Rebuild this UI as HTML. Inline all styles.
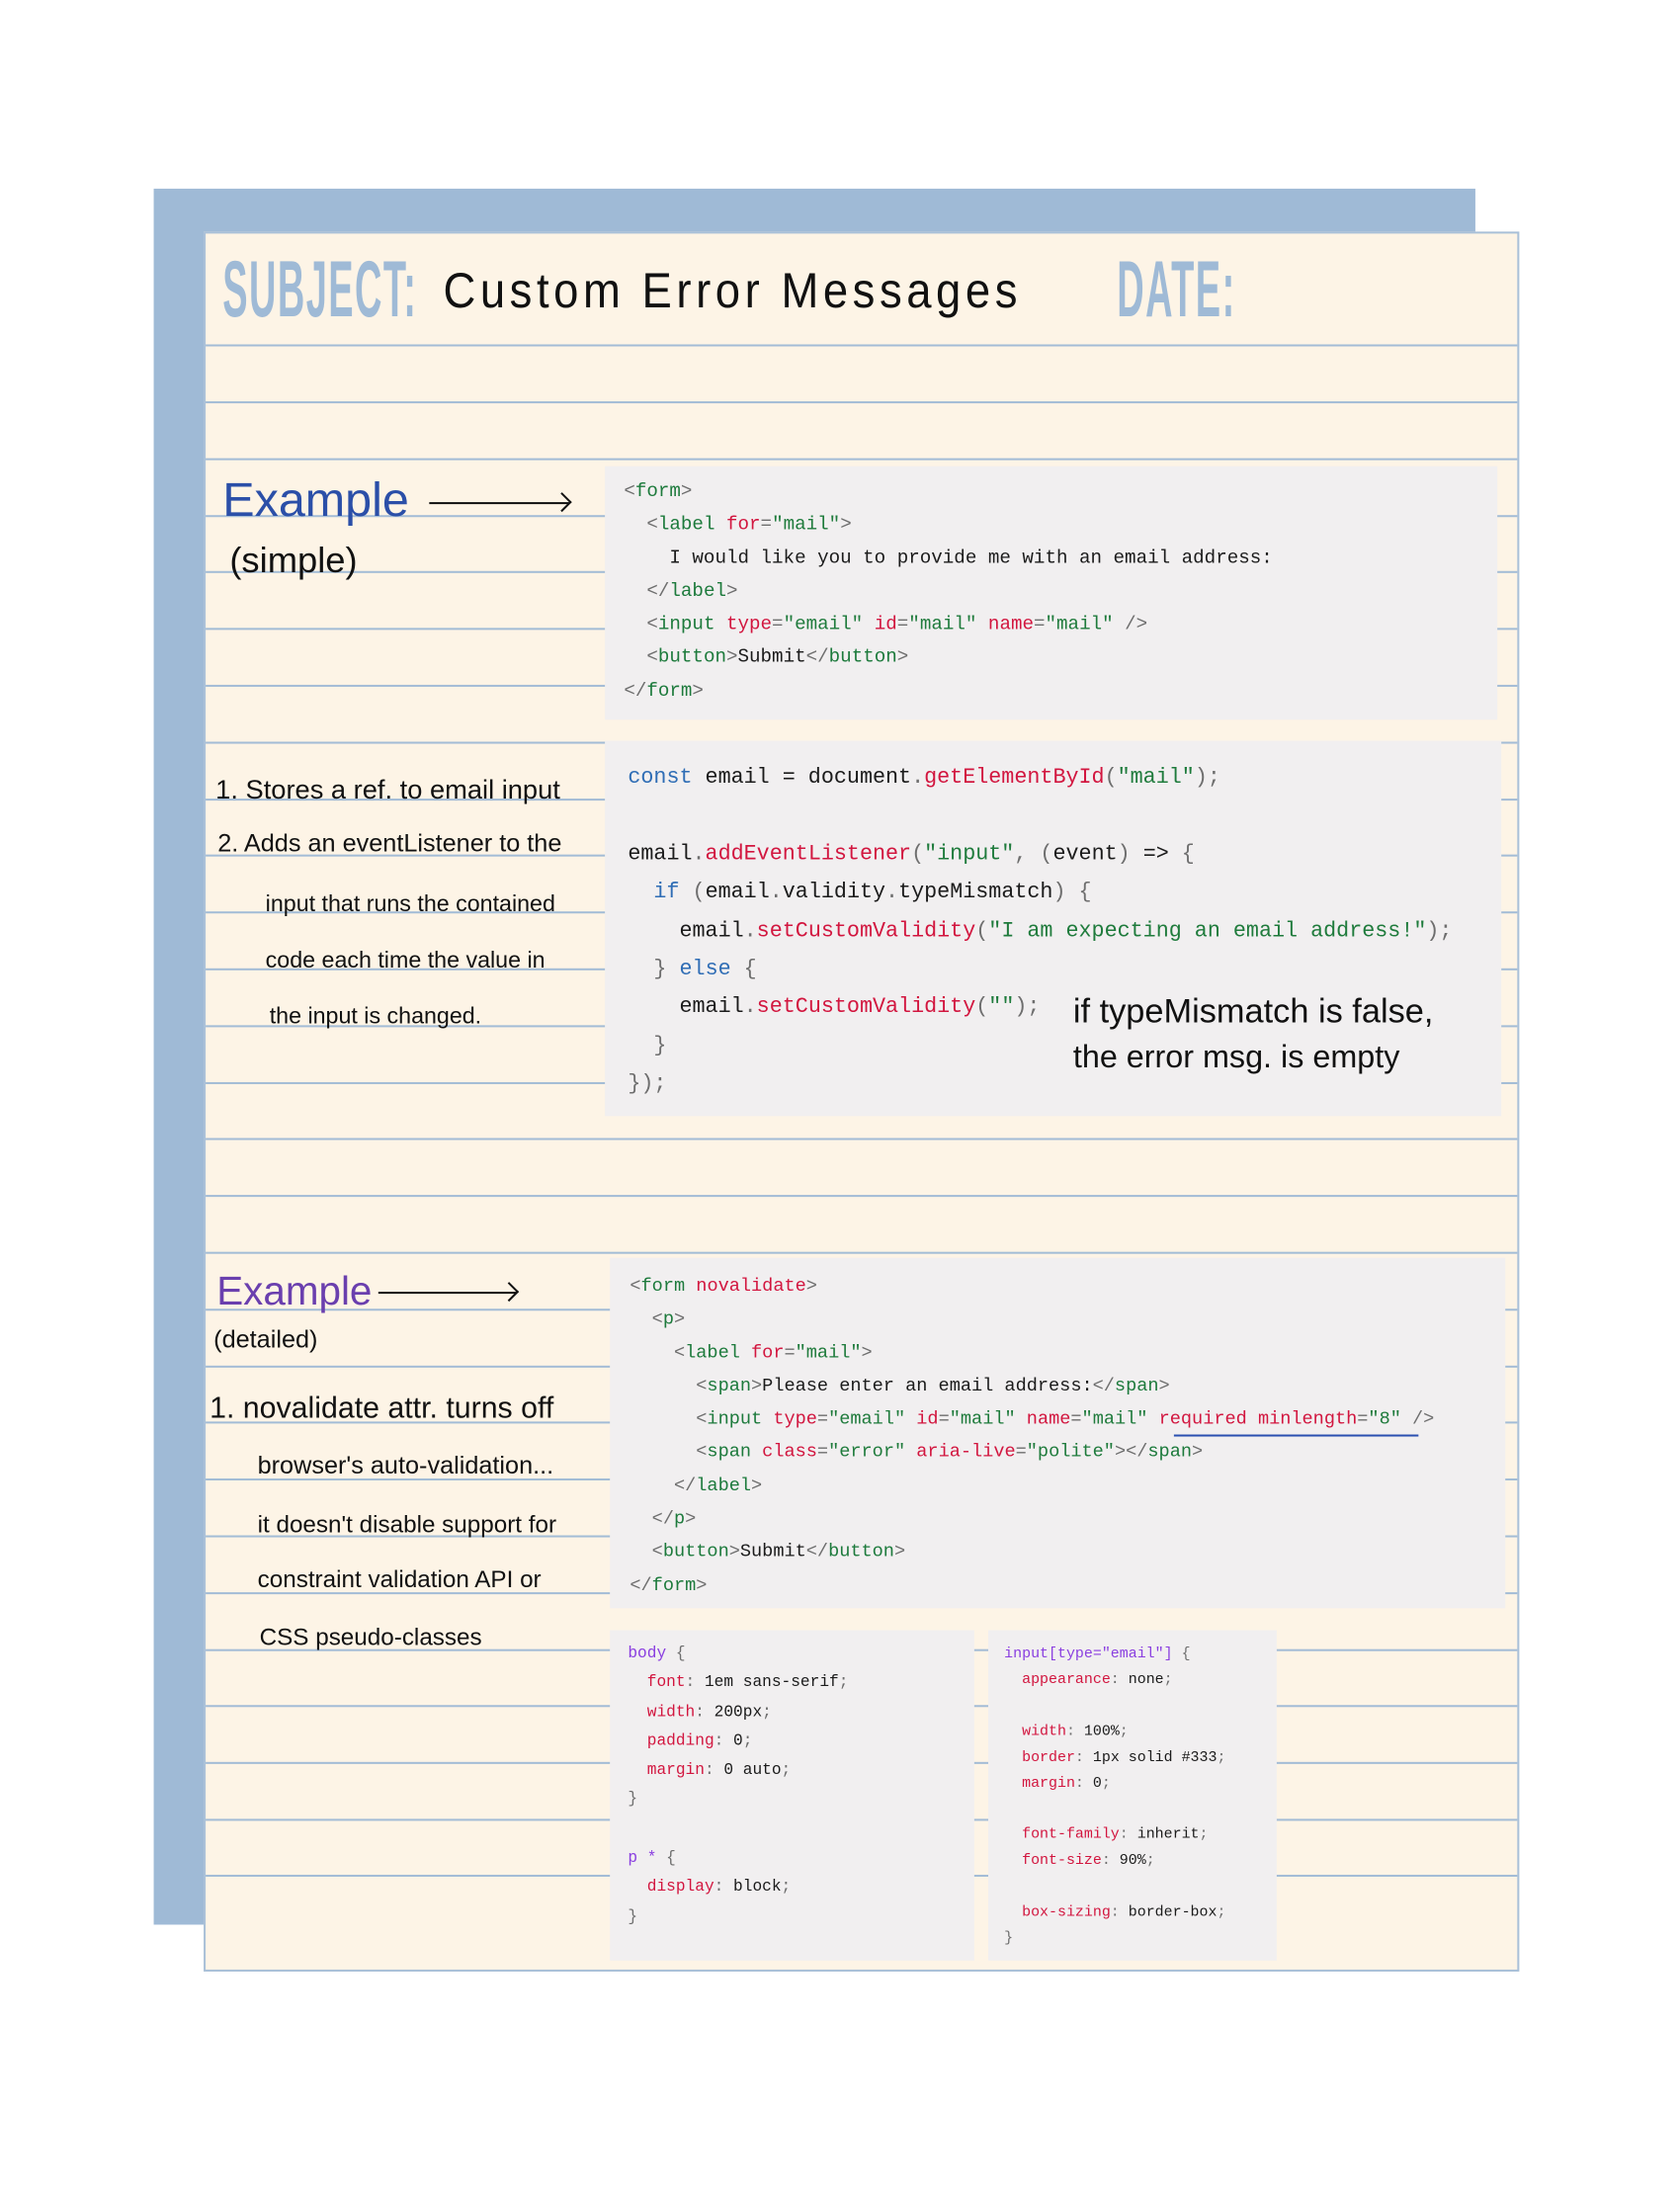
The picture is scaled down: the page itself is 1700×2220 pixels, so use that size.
<!DOCTYPE html>
<html><head><meta charset="utf-8"><style>
body{margin:0;width:1700px;height:2198px;background:#fff;position:relative;overflow:hidden;font-family:"Liberation Sans",sans-serif}
#w{position:absolute;left:0;top:0;width:1700px;height:2198px;transform:scale(1.0101);transform-origin:0 0}
.back{position:absolute;left:154px;top:189px;width:1324px;height:1739px;background:#9fbad6}
.paper{position:absolute;left:204px;top:232px;width:1318px;height:1743px;background:#fdf4e6;border:2px solid #a9c0d8;box-sizing:border-box}
.lines{position:absolute;left:206px;width:1314px;top:0;height:2198px}
.ln{position:absolute;left:0;width:1314px;height:2px;background:#a3bcd6}
.box{position:absolute;background:#f1eff0}
pre{margin:0;position:absolute;font-family:"Liberation Mono","DejaVu Sans Mono",monospace;color:#1b1b1b;white-space:pre}
.p{color:#6e6e6e}.t{color:#1d7a3c}.a{color:#d2163f}.v{color:#1f7b3c}.k{color:#2f6db5}.s{color:#8a3fe0}.f{color:#d2163f}
.hw{position:absolute;font-family:"Liberation Sans Narrow","Liberation Sans",sans-serif;color:#111;white-space:nowrap;font-weight:normal}
.arrow{position:absolute;height:2px;background:#111}
.arrow:after{content:"";position:absolute;right:0;top:-7px;width:12px;height:12px;border-top:2px solid #111;border-right:2px solid #111;transform:rotate(45deg);transform-origin:center}
</style></head><body><div id="w">
<div class="back"></div>
<div class="paper"></div>
<div class="lines">
<div class="ln" style="top:345px"></div><div class="ln" style="top:402px"></div><div class="ln" style="top:459px"></div><div class="ln" style="top:516px"></div><div class="ln" style="top:572px"></div><div class="ln" style="top:629px"></div><div class="ln" style="top:686px"></div><div class="ln" style="top:743px"></div><div class="ln" style="top:800px"></div><div class="ln" style="top:856px"></div><div class="ln" style="top:913px"></div><div class="ln" style="top:970px"></div><div class="ln" style="top:1027px"></div><div class="ln" style="top:1084px"></div><div class="ln" style="top:1140px"></div><div class="ln" style="top:1197px"></div><div class="ln" style="top:1254px"></div><div class="ln" style="top:1311px"></div><div class="ln" style="top:1368px"></div><div class="ln" style="top:1424px"></div><div class="ln" style="top:1481px"></div><div class="ln" style="top:1538px"></div><div class="ln" style="top:1595px"></div><div class="ln" style="top:1652px"></div><div class="ln" style="top:1708px"></div><div class="ln" style="top:1765px"></div><div class="ln" style="top:1822px"></div><div class="ln" style="top:1878px"></div>
</div>

<div class="hw" style="left:223px;top:244px;font-size:80px;color:#9fbad6;font-weight:bold;transform:scaleX(0.47);transform-origin:left top;letter-spacing:3px">SUBJECT:</div>
<div class="hw" style="left:444px;top:262px;font-size:50px;letter-spacing:5px;transform:scaleX(0.9);transform-origin:left top">Custom Error Messages</div>
<div class="hw" style="left:1119px;top:244px;font-size:80px;color:#9fbad6;font-weight:bold;transform:scaleX(0.47);transform-origin:left top;letter-spacing:3px">DATE:</div>

<div class="box" style="left:606px;top:467px;width:894px;height:254px"></div>
<pre style="left:625px;top:476px;font-size:19px;line-height:33.3px"><span class="p">&lt;</span><span class="t">form</span><span class="p">&gt;</span>
  <span class="p">&lt;</span><span class="t">label</span> <span class="a">for</span><span class="p">=</span><span class="v">"mail"</span><span class="p">&gt;</span>
    I would like you to provide me with an email address:
  <span class="p">&lt;/</span><span class="t">label</span><span class="p">&gt;</span>
  <span class="p">&lt;</span><span class="t">input</span> <span class="a">type</span><span class="p">=</span><span class="v">"email"</span> <span class="a">id</span><span class="p">=</span><span class="v">"mail"</span> <span class="a">name</span><span class="p">=</span><span class="v">"mail"</span> <span class="p">/&gt;</span>
  <span class="p">&lt;</span><span class="t">button</span><span class="p">&gt;</span>Submit<span class="p">&lt;/</span><span class="t">button</span><span class="p">&gt;</span>
<span class="p">&lt;/</span><span class="t">form</span><span class="p">&gt;</span></pre>

<div class="box" style="left:606px;top:742px;width:898px;height:376px"></div>
<pre style="left:629px;top:760px;font-size:21.5px;line-height:38.4px"><span class="k">const</span> email = document<span class="p">.</span><span class="a">getElementById</span><span class="p">(</span><span class="v">"mail"</span><span class="p">);</span>

email<span class="p">.</span><span class="a">addEventListener</span><span class="p">(</span><span class="v">"input"</span><span class="p">,</span> <span class="p">(</span>event<span class="p">)</span> =&gt; <span class="p">{</span>
  <span class="k">if</span> <span class="p">(</span>email<span class="p">.</span>validity<span class="p">.</span>typeMismatch<span class="p">)</span> <span class="p">{</span>
    email<span class="p">.</span><span class="a">setCustomValidity</span><span class="p">(</span><span class="v">"I am expecting an email address!"</span><span class="p">);</span>
  <span class="p">}</span> <span class="k">else</span> <span class="p">{</span>
    email<span class="p">.</span><span class="a">setCustomValidity</span><span class="p">(</span><span class="v">""</span><span class="p">);</span>
  <span class="p">}</span>
<span class="p">});</span></pre>
<div class="hw" style="left:1075px;top:994px;font-size:34px">if typeMismatch is false,</div>
<div class="hw" style="left:1075px;top:1040px;font-size:32px">the error msg. is empty</div>

<div class="box" style="left:611px;top:1260px;width:897px;height:351px"></div>
<pre style="left:631px;top:1272px;font-size:18.4px;line-height:33.3px"><span class="p">&lt;</span><span class="t">form</span> <span class="a">novalidate</span><span class="p">&gt;</span>
  <span class="p">&lt;</span><span class="t">p</span><span class="p">&gt;</span>
    <span class="p">&lt;</span><span class="t">label</span> <span class="a">for</span><span class="p">=</span><span class="v">"mail"</span><span class="p">&gt;</span>
      <span class="p">&lt;</span><span class="t">span</span><span class="p">&gt;</span>Please enter an email address:<span class="p">&lt;/</span><span class="t">span</span><span class="p">&gt;</span>
      <span class="p">&lt;</span><span class="t">input</span> <span class="a">type</span><span class="p">=</span><span class="v">"email"</span> <span class="a">id</span><span class="p">=</span><span class="v">"mail"</span> <span class="a">name</span><span class="p">=</span><span class="v">"mail"</span> <span class="a">required</span> <span class="a">minlength</span><span class="p">=</span><span class="v">"8"</span> <span class="p">/&gt;</span>
      <span class="p">&lt;</span><span class="t">span</span> <span class="a">class</span><span class="p">=</span><span class="v">"error"</span> <span class="a">aria-live</span><span class="p">=</span><span class="v">"polite"</span><span class="p">&gt;&lt;/</span><span class="t">span</span><span class="p">&gt;</span>
    <span class="p">&lt;/</span><span class="t">label</span><span class="p">&gt;</span>
  <span class="p">&lt;/</span><span class="t">p</span><span class="p">&gt;</span>
  <span class="p">&lt;</span><span class="t">button</span><span class="p">&gt;</span>Submit<span class="p">&lt;/</span><span class="t">button</span><span class="p">&gt;</span>
<span class="p">&lt;/</span><span class="t">form</span><span class="p">&gt;</span></pre>
<div style="position:absolute;left:1176px;top:1437px;width:245px;height:2px;background:#2a4fb0"></div>

<div class="box" style="left:611px;top:1633px;width:365px;height:331px"></div>
<pre style="left:629px;top:1642px;font-size:16px;line-height:29.3px"><span class="s">body</span> <span class="p">{</span>
  <span class="f">font</span><span class="p">:</span> 1em sans-serif<span class="p">;</span>
  <span class="f">width</span><span class="p">:</span> 200px<span class="p">;</span>
  <span class="f">padding</span><span class="p">:</span> 0<span class="p">;</span>
  <span class="f">margin</span><span class="p">:</span> 0 auto<span class="p">;</span>
<span class="p">}</span>

<span class="s">p</span> <span class="s">*</span> <span class="p">{</span>
  <span class="f">display</span><span class="p">:</span> block<span class="p">;</span>
<span class="p">}</span></pre>

<div class="box" style="left:990px;top:1633px;width:289px;height:331px"></div>
<pre style="left:1006px;top:1645px;font-size:14.8px;line-height:25.9px"><span class="s">input[type="email"]</span> <span class="p">{</span>
  <span class="f">appearance</span><span class="p">:</span> none<span class="p">;</span>

  <span class="f">width</span><span class="p">:</span> 100%<span class="p">;</span>
  <span class="f">border</span><span class="p">:</span> 1px solid #333<span class="p">;</span>
  <span class="f">margin</span><span class="p">:</span> 0<span class="p">;</span>

  <span class="f">font-family</span><span class="p">:</span> inherit<span class="p">;</span>
  <span class="f">font-size</span><span class="p">:</span> 90%<span class="p">;</span>

  <span class="f">box-sizing</span><span class="p">:</span> border-box<span class="p">;</span>
<span class="p">}</span></pre>

<div class="hw" style="left:223px;top:474px;font-size:48px;color:#2b4fa8">Example</div>
<div class="arrow" style="left:430px;top:503px;width:140px"></div>
<div class="hw" style="left:230px;top:540px;font-size:36px">(simple)</div>

<div class="hw" style="left:216px;top:776px;font-size:27px">1. Stores a ref. to email input</div>
<div class="hw" style="left:218px;top:831px;font-size:25px">2. Adds an eventListener to the</div>
<div class="hw" style="left:266px;top:892px;font-size:23px">input that runs the contained</div>
<div class="hw" style="left:266px;top:948px;font-size:23px">code each time the value in</div>
<div class="hw" style="left:270px;top:1004px;font-size:23px">the input is changed.</div>

<div class="hw" style="left:217px;top:1272px;font-size:40px;color:#6a3fae">Example</div>
<div class="arrow" style="left:379px;top:1294px;width:138px"></div>
<div class="hw" style="left:214px;top:1328px;font-size:25px">(detailed)</div>
<div class="hw" style="left:210px;top:1394px;font-size:30px">1. novalidate attr. turns off</div>
<div class="hw" style="left:258px;top:1454px;font-size:25px">browser's auto-validation...</div>
<div class="hw" style="left:258px;top:1514px;font-size:24px">it doesn't disable support for</div>
<div class="hw" style="left:258px;top:1569px;font-size:24px">constraint validation API or</div>
<div class="hw" style="left:260px;top:1627px;font-size:24px">CSS pseudo-classes</div>
</div></body></html>
